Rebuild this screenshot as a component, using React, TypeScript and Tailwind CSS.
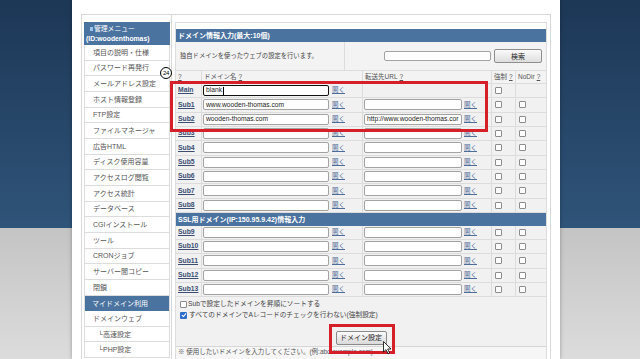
const font = "font-['Liberation_Sans','Noto_Sans_CJK_JP',sans-serif]";

const menu = [
  "項目の説明・仕様",
  "パスワード再発行",
  "メールアドレス設定",
  "ホスト情報登録",
  "FTP設定",
  "ファイルマネージャ",
  "広告HTML",
  "ディスク使用容量",
  "アクセスログ閲覧",
  "アクセス統計",
  "データベース",
  "CGIインストール",
  "ツール",
  "CRONジョブ",
  "サーバー間コピー",
  "閉鎖",
];

function Box({ checked }: { checked?: boolean }) {
  if (checked) {
    return (
      <span className="inline-flex h-[7px] w-[7px] items-center justify-center rounded-[1px] bg-[#2f6fcc]">
        <svg viewBox="0 0 8 8" className="h-[6px] w-[6px]">
          <path d="M1.2 4.2 L3.2 6 L6.8 1.8" fill="none" stroke="#fff" strokeWidth="1.4" />
        </svg>
      </span>
    );
  }
  return <span className="inline-block h-[7px] w-[7px] rounded-[1px] border border-[#8c8c8c] bg-white" />;
}

function Field({ value, w, focus }: { value?: string; w: string; focus?: boolean }) {
  return (
    <div
      className={`${w} flex h-[11px] items-center overflow-hidden whitespace-nowrap rounded-[2px] bg-white pl-[2px] text-[6.7px] leading-none text-[#222] ${
        focus ? "border-[1.5px] border-[#111]" : "border border-[#a3a3a3]"
      }`}
    >
      {value}
      {focus && <span className="ml-[0.5px] h-[8px] w-px bg-black" />}
    </div>
  );
}

function Open() {
  return <span className="text-[6.5px] leading-none text-[#4d6c98] underline">開く</span>;
}

function Row({
  label,
  domain,
  url,
  main,
  h,
}: {
  label: string;
  domain?: string;
  url?: string;
  main?: boolean;
  h: string;
}) {
  return (
    <div className={`flex ${h} border-b border-[#dcdcdc] bg-[#f1f1f1]`}>
      <div className="flex w-[26px] items-center border-r border-[#dcdcdc] pl-[2px]">
        <span className="text-[6.8px] leading-none font-bold text-[#3b4e72] underline">{label}</span>
      </div>
      <div className="flex w-[161px] items-center gap-[3px] border-r border-[#dcdcdc] pl-[1px]">
        <Field value={domain} w="w-[126px]" focus={main} />
        <Open />
      </div>
      <div className="flex w-[129px] items-center gap-[2px] border-r border-[#dcdcdc] pl-[1px]">
        {!main && (
          <>
            <Field value={url} w="w-[98px]" />
            <Open />
          </>
        )}
      </div>
      <div className="flex w-[24px] items-center border-r border-[#dcdcdc] pl-[3px]">
        <Box />
      </div>
      <div className="flex flex-1 items-center pl-[3px]">{!main && <Box />}</div>
    </div>
  );
}

function Bar({ children }: { children: React.ReactNode }) {
  return (
    <div className="flex h-[13px] items-center bg-[#4b73a0] pl-[2px] text-[7px] leading-none font-bold text-white">
      {children}
    </div>
  );
}

export default function App() {
  return (
    <div
      className={`${font} relative h-[359px] w-[640px] overflow-hidden bg-[linear-gradient(to_bottom,#1d3756_0px,#2f5479_228px,#c4c4c4_228px,#dcdcdc_359px)]`}
    >
      <div className="ml-[72px] h-[359px] w-[488px] bg-white pt-[14px] shadow-[0_0_4px_rgba(0,0,0,0.3)]">
        <div className="ml-[9px] flex w-[470px] border border-b-0 border-[#d8d8d8]">
          {/* sidebar */}
          <div className="w-[90px] border-r border-[#d8d8d8] pr-[1px] pl-[2px] pt-[7px]">
            <div className="flex h-[23px] flex-col justify-center bg-[#4b73a0] pl-[2px] text-[6.8px] leading-[10px] text-white">
              <div className="flex items-center gap-[1px] pl-[4px]">
                <span className="h-[4px] w-[3px] bg-[#9cc4ec]" />
                管理メニュー
              </div>
              <div className="font-bold">(ID:woodenthomas)</div>
            </div>
            <div className="border-x border-[#dcdcdc]">
              {menu.map((m) => (
                <div
                  key={m}
                  className="flex h-[15.67px] items-center border-b border-[#dcdcdc] bg-white pl-[8px] text-[7px] leading-none text-[#555]"
                >
                  {m}
                </div>
              ))}
              <div className="flex h-[15.67px] items-center bg-[#4b73a0] pl-[7px] text-[7px] leading-none text-white">
                マイドメイン利用
              </div>
              {["ドメインウェブ", "└高速設定", "└PHP設定"].map((m, i) => (
                <div
                  key={m}
                  className={`flex h-[15.67px] items-center border-b border-[#dcdcdc] bg-white text-[7px] leading-none text-[#555] ${
                    i === 0 ? "pl-[8px]" : "pl-[13px]"
                  }`}
                >
                  {m}
                </div>
              ))}
            </div>
          </div>

          {/* main */}
          <div className="flex-1 px-[3px] pt-[7px]">
            <div className="border border-b-0 border-[#dcdcdc] pt-[6px]">
              <Bar>ドメイン情報入力(最大:10個)</Bar>
              <div className="flex h-[29px] border-b border-[#dcdcdc] bg-[#f3f3f3]">
                <div className="flex w-[169px] items-center border-r border-[#dcdcdc] pl-[4px] text-[6.3px] leading-none text-[#444]">
                  独自ドメインを使ったウェブの設定を行います。
                </div>
                <div className="flex flex-1 items-center justify-end gap-[3px] pr-[4px]">
                  <div className="h-[10px] w-[107px] rounded-[2px] border border-[#a3a3a3] bg-white" />
                  <div className="flex h-[14px] w-[48px] items-center justify-center rounded-[2px] border border-[#8f8f8f] bg-[linear-gradient(to_bottom,#fafafa,#dedede)] text-[7px] leading-none text-[#222]">
                    検索
                  </div>
                </div>
              </div>
              <div className="flex h-[13px] border-b border-[#dcdcdc] bg-[#f3f3f3] text-[6.5px] leading-none text-[#555]">
                <div className="flex w-[26px] items-center border-r border-[#dcdcdc] pl-[2px] underline">?</div>
                <div className="flex w-[161px] items-center border-r border-[#dcdcdc] pl-[2px]">
                  ドメイン名 <span className="ml-[2px] underline">?</span>
                </div>
                <div className="flex w-[129px] items-center border-r border-[#dcdcdc] pl-[2px]">
                  転送先URL <span className="ml-[2px] underline">?</span>
                </div>
                <div className="flex w-[24px] items-center border-r border-[#dcdcdc] pl-[2px]">
                  強制 <span className="ml-[2px] underline">?</span>
                </div>
                <div className="flex flex-1 items-center pl-[2px]">
                  NoDir <span className="ml-[2px] underline">?</span>
                </div>
              </div>
              <Row h="h-[14.33px]" label="Main" domain="blank" main />
              <Row h="h-[14.33px]" label="Sub1" domain="www.wooden-thomas.com" />
              <Row h="h-[14.33px]" label="Sub2" domain="wooden-thomas.com" url="http://www.wooden-thomas.cor" />
              {["Sub3", "Sub4", "Sub5", "Sub6", "Sub7", "Sub8"].map((s) => (
                <Row key={s} h="h-[14.33px]" label={s} />
              ))}
              <Bar>SSL用ドメイン(IP:150.95.9.42)情報入力</Bar>
              {["Sub9", "Sub10", "Sub11", "Sub12", "Sub13"].map((s) => (
                <Row key={s} h="h-[14.2px]" label={s} />
              ))}
              <div className="h-[50px] border-b border-[#d6d6d6] bg-[#f1f1f1] pt-[2px] pl-[4px] text-[6.7px] leading-none text-[#444]">
                <div className="flex h-[11px] items-center gap-[1px]">
                  <Box />
                  Subで設定したドメインを昇順にソートする
                </div>
                <div className="flex h-[11px] items-center gap-[2px]">
                  <Box checked />
                  すべてのドメインでAレコードのチェックを行わない(強制設定)
                </div>
                <div className="mt-[10px] flex justify-center pr-[4px]">
                  <div className="flex h-[14px] w-[51px] items-center justify-center rounded-[2px] border border-[#8a8a8a] bg-[linear-gradient(to_bottom,#fafafa,#dadada)] text-[7px] text-[#222]">
                    ドメイン設定
                  </div>
                </div>
              </div>
              <div className="h-[14px] bg-[#f6f6f6] pt-[2px] pl-[2px] text-[6.5px] leading-none text-[#555]">
                ※ 使用したいドメインを入力してください。(例:abc.example.com)
              </div>
            </div>
          </div>
        </div>
      </div>

      {/* annotations */}
      <div className="absolute top-[67px] left-[160px] flex h-[12px] w-[12px] items-center justify-center rounded-full border border-black bg-white text-[6px] leading-none tracking-[-0.3px] text-black">
        24
      </div>
      <div className="absolute top-[81px] left-[170px] h-[51px] w-[318px] border-[3px] border-[#d5202a]" />
      <div className="absolute top-[324px] left-[329px] h-[30px] w-[66px] border-[3px] border-[#d5202a]" />
      <svg className="absolute top-[341px] left-[383px]" width="9" height="14" viewBox="0 0 9 14">
        <path d="M0.5 0.5 L0.5 11 L3 8.6 L5 12.8 L6.6 12 L4.7 8 L8 8 Z" fill="#fff" stroke="#000" strokeWidth="0.8" />
      </svg>
    </div>
  );
}
